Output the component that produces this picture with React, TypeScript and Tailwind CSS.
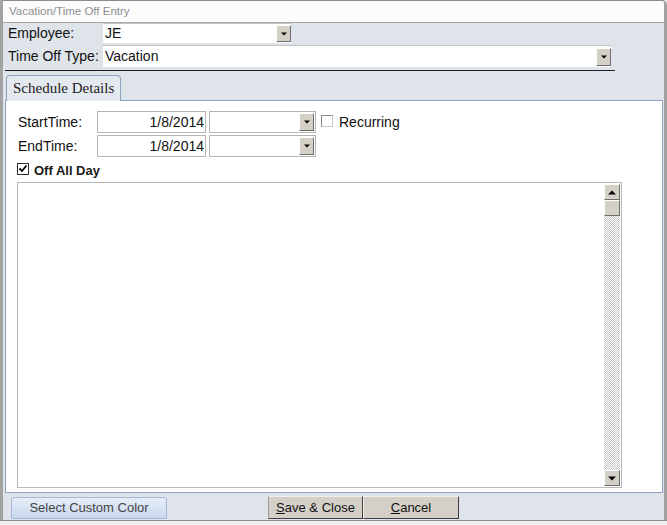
import React from 'react'

// Access-style "Vacation/Time Off Entry" form

function DropButton({ className = '' }: { className?: string }) {
  return (
    <div
      className={`flex items-center justify-center bg-[#d4d0c8] border border-t-[#ffffff] border-l-[#ffffff] border-b-[#6e6e6e] border-r-[#6e6e6e] ${className}`}
    >
      <svg width="6" height="4" viewBox="0 0 6 4">
        <path d="M0 0.5 H6 L3 3.5 Z" fill="#000" />
      </svg>
    </div>
  )
}

function ScrollButton({ dir }: { dir: 'up' | 'down' }) {
  return (
    <div className="flex h-[16px] w-[16px] shrink-0 items-center justify-center bg-[#d4d0c8] border border-t-[#ffffff] border-l-[#ffffff] border-b-[#6e6e6e] border-r-[#6e6e6e]">
      <svg width="8" height="5" viewBox="0 0 8 5">
        {dir === 'up' ? (
          <path d="M0 4.5 H8 L4 0.5 Z" fill="#000" />
        ) : (
          <path d="M0 0.5 H8 L4 4.5 Z" fill="#000" />
        )}
      </svg>
    </div>
  )
}

function CheckBox({ checked }: { checked?: boolean }) {
  return (
    <div
      className={`relative h-[12px] w-[12px] shrink-0 border bg-white ${
        checked ? 'border-[#2c2c2c]' : 'border-[#8a8a8a] border-r-[#c8c8c8] border-b-[#c8c8c8]'
      }`}
    >
      {checked && (
        <svg className="absolute left-0 top-0" width="10" height="10" viewBox="0 0 10 10">
          <path d="M1.5 4.5 L4 7 L8.5 1.5" stroke="#000" strokeWidth="1.8" fill="none" />
        </svg>
      )}
    </div>
  )
}

function TimeRow({ label, date, checkbox }: { label: string; date: string; checkbox?: boolean }) {
  return (
    <div className="flex h-[22px] items-start pl-[12px]">
      <div className="flex h-[22px] w-[79px] items-center text-[14px] text-[#111]">{label}</div>
      <div className="flex h-[22px] w-[109px] items-center justify-end border border-[#b4b4b4] bg-white pr-[1px] text-[14px] text-[#111]">
        {date}
      </div>
      <div className="ml-[3px] flex h-[22px] w-[107px] items-center justify-end border border-[#b4b4b4] bg-white pr-[1px]">
        <DropButton className="h-[18px] w-[15px]" />
      </div>
      {checkbox && (
        <div className="ml-[5px] mt-[1px] flex items-center">
          <CheckBox />
          <span className="ml-[6px] mt-[3px] text-[14px] leading-[14px] text-[#111]">Recurring</span>
        </div>
      )}
    </div>
  )
}

export default function App() {
  return (
    <div className="flex h-[525px] w-[667px] flex-col bg-[#f0f0f0] font-['Liberation_Sans',Arial,sans-serif]">
      <div className="flex flex-1 flex-col overflow-hidden rounded-tr-[5px] border-t border-l-[3px] border-r-[3px] border-t-[#8c8c8c] border-x-[#a2a2a2]">
        {/* title strip */}
        <div className="flex h-[22px] shrink-0 items-center border-b border-[#a6a6a6] bg-[#fcfcfc] pl-[6px] text-[11.5px] text-[#8e8e8e]">
          Vacation/Time Off Entry
        </div>

        {/* form body */}
        <div className="flex flex-1 flex-col bg-[#dfe3ea]">
          <div className="flex h-[20px] items-center">
            <div className="w-[100px] pl-[5px] text-[14px] text-[#111]">Employee:</div>
            <div className="flex h-[20px] w-[188px] items-center justify-between border-t border-[#c4c4c4] bg-white pl-[2px] text-[14px] text-[#111]">
              <span>JE</span>
              <DropButton className="h-[17px] w-[15px]" />
            </div>
          </div>

          <div className="mt-[2px] flex h-[22px] items-center">
            <div className="w-[100px] pl-[5px] text-[14px] text-[#111]">Time Off Type:</div>
            <div className="flex h-[22px] w-[508px] items-center justify-between border-t border-[#c4c4c4] bg-white pl-[2px] text-[14px] text-[#111]">
              <span>Vacation</span>
              <DropButton className="h-[18px] w-[15px]" />
            </div>
          </div>

          <div className="ml-[2px] mt-[3px] h-px w-[610px] bg-[#1e1e1e]" />

          {/* tab */}
          <div className="relative z-10 -mb-px ml-[3px] mt-[4px] flex h-[26px] w-[115px] items-center rounded-t-[4px] border border-b-0 border-[#8ea3c1] bg-[#e4e9f0] pl-[6px] font-['Liberation_Serif','Times_New_Roman',serif] text-[15px] text-[#222]">
            Schedule Details
          </div>

          {/* tab panel */}
          <div className="ml-[2px] flex h-[393px] w-[658px] flex-col border border-[#8ea3c1] bg-white">
            <div className="mt-[10px]">
              <TimeRow label="StartTime:" date="1/8/2014" checkbox />
            </div>
            <div className="mt-[2px]">
              <TimeRow label="EndTime:" date="1/8/2014" />
            </div>

            <div className="mt-[5px] flex h-[14px] items-center pl-[11px]">
              <CheckBox checked />
              <span className="ml-[5px] mt-[3px] text-[13px] font-bold leading-[14px] text-[#1a1a1a]">Off All Day</span>
            </div>

            <div className="ml-[11px] mt-[6px] flex h-[306px] w-[605px] justify-end border border-[#b8b8b8] bg-white py-px pr-px">
              <div className="flex w-[16px] flex-col">
                <ScrollButton dir="up" />
                <div className="h-[16px] w-[16px] shrink-0 bg-[#d4d0c8] border border-t-[#ffffff] border-l-[#ffffff] border-b-[#6e6e6e] border-r-[#6e6e6e]" />
                <div className="flex-1 bg-[repeating-conic-gradient(#c8c8c8_0%_25%,#ffffff_0%_50%)] bg-[length:2px_2px]" />
                <ScrollButton dir="down" />
              </div>
            </div>
          </div>

          {/* footer buttons */}
          <div className="mt-[3px] flex h-[23px] items-end">
            <div className="ml-[8px] flex h-[22px] w-[156px] items-center justify-center rounded-t-[3px] border border-[#a3b7d6] bg-gradient-to-b from-[#e6edf8] to-[#c8d8ee] text-[13px] text-[#444]">
              Select Custom Color
            </div>
            <div className="ml-[101px] flex h-[23px] w-[95px] items-center justify-center border border-l-[#9a9a9a] border-t-[#efefef] border-b-[#3e3e3e] border-r-[#3e3e3e] bg-[#d4d0c8] text-[13px] text-[#111]">
              <span><span className="underline">S</span>ave &amp; Close</span>
            </div>
            <div className="flex h-[23px] w-[96px] items-center justify-center border border-l-[#efefef] border-t-[#efefef] border-b-[#3e3e3e] border-r-[#3e3e3e] bg-[#d4d0c8] text-[13px] text-[#111]">
              <span><span className="underline">C</span>ancel</span>
            </div>
          </div>
        </div>
      </div>
      <div className="h-[5px] shrink-0 border-t border-[#8c8c8c] bg-[#f0f0f0]" />
    </div>
  )
}
